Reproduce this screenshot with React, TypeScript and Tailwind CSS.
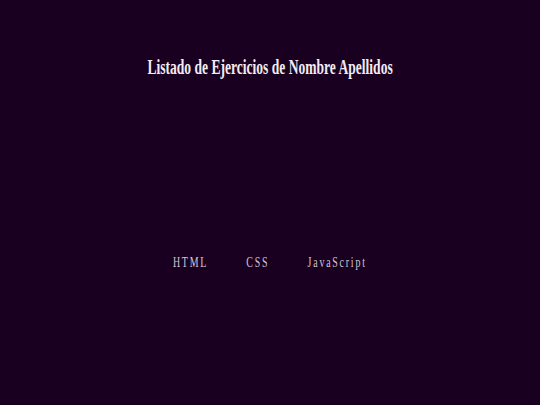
export default function App() {
  return (
    <div className="min-h-screen bg-[#1a0020] flex flex-col items-center" style={{ fontFamily: '"Liberation Serif", serif' }}>
      <h1 className="mt-[54px] text-[21px] font-bold text-[#f2ecf2] leading-[26px] whitespace-nowrap scale-x-[0.645]">
        Listado de Ejercicios de Nombre Apellidos
      </h1>
      <nav className="mt-[173px] flex gap-[58px] text-[15px] leading-[18px] tracking-[2.7px] text-[#d4c6d4] scale-x-[0.66]">
        <a href="#">HTML</a>
        <a href="#">CSS</a>
        <a href="#">JavaScript</a>
      </nav>
    </div>
  )
}
